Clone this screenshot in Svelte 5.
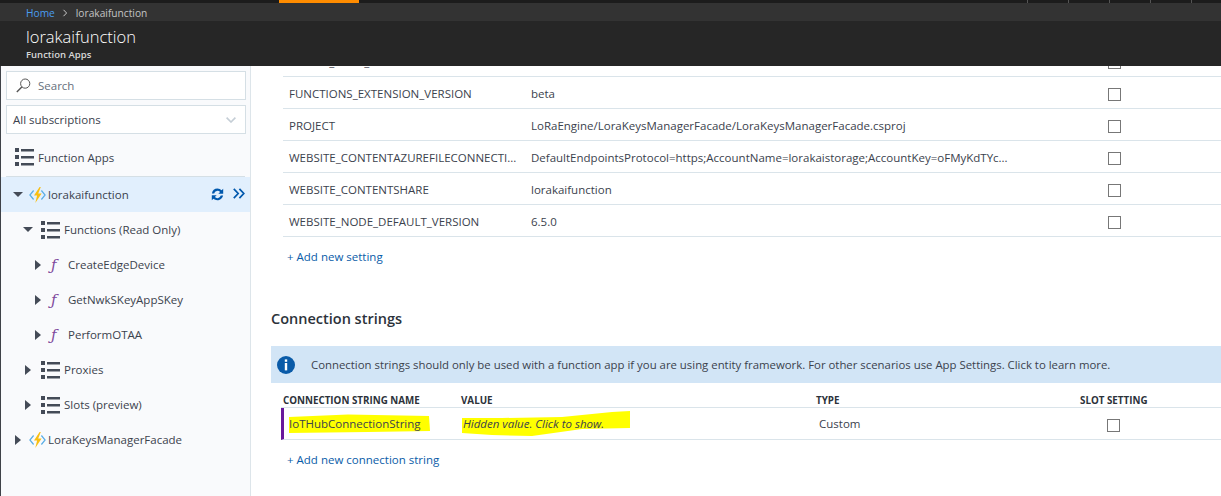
<script>
  const appSettings = [
    { name: "SERVER_HOST_NAME", value: "" },
    { name: "FUNCTIONS_EXTENSION_VERSION", value: "beta" },
    { name: "PROJECT", value: "LoRaEngine/LoraKeysManagerFacade/LoraKeysManagerFacade.csproj" },
    { name: "WEBSITE_CONTENTAZUREFILECONNECTI...", value: "DefaultEndpointsProtocol=https;AccountName=lorakaistorage;AccountKey=oFMyKdTYc..." },
    { name: "WEBSITE_CONTENTSHARE", value: "lorakaifunction" },
    { name: "WEBSITE_NODE_DEFAULT_VERSION", value: "6.5.0" }
  ];

  // one entry per row of the resource tree
  const tree = [
    { label: "lorakaifunction", indent: 12, caret: "down", icon: "app", selected: true },
    { label: "Functions (Read Only)", indent: 22, caret: "down", icon: "list" },
    { label: "CreateEdgeDevice", indent: 32, caret: "right", icon: "fn" },
    { label: "GetNwkSKeyAppSKey", indent: 32, caret: "right", icon: "fn" },
    { label: "PerformOTAA", indent: 32, caret: "right", icon: "fn" },
    { label: "Proxies", indent: 22, caret: "right", icon: "list" },
    { label: "Slots (preview)", indent: 22, caret: "right", icon: "list" },
    { label: "LoraKeysManagerFacade", indent: 12, caret: "right", icon: "app" }
  ];
</script>

{#snippet listIcon()}
  <svg class="list-icon" width="19" height="18" viewBox="0 0 19 18">
    <path fill="#444b57" d="M0 0h4v4H0zM6 1h13v2.4H6zM0 7h4v4H0zM6 8h13v2.4H6zM0 14h4v4H0zM6 15h13v2.4H6z" />
  </svg>
{/snippet}

{#snippet appIcon()}
  <svg class="app-icon" width="17" height="16" viewBox="0 0 17 16">
    <path fill="none" stroke="#5aaee6" stroke-width="1.2" d="M4.6 3.5 0.9 8l3.7 4.5M12.4 3.5 16.1 8l-3.7 4.5" />
    <path fill="#f9bf12" d="M10.6 0 5 8.6h3.1L6.3 16l6.3-9.6H9.2l2.6-6.4z" />
  </svg>
{/snippet}

<div class="portal">
  <div class="topbar">
    <span class="active-tab"></span>
    <div class="top-actions">
      <span></span><span></span><span></span><span></span><span></span>
    </div>
  </div>

  <div class="breadcrumb">
    <span class="home">Home</span>
    <svg width="6" height="8" viewBox="0 0 6 8"><path fill="none" stroke="#c8c8c8" d="M1.5 .8 4.6 4 1.5 7.2" /></svg>
    <span class="crumb">lorakaifunction</span>
  </div>

  <header class="blade-head">
    <div class="title">lorakaifunction</div>
    <div class="subtitle">Function Apps</div>
  </header>

  <div class="body">
    <aside class="sidebar">
      <div class="search">
        <svg width="15" height="15" viewBox="0 0 15 15">
          <circle cx="9.2" cy="5.6" r="4.6" fill="none" stroke="#555" stroke-width="1" />
          <path stroke="#555" stroke-width="1.4" d="M5.8 9 .8 14" />
        </svg>
        <span>Search</span>
      </div>
      <div class="subs">
        <span>All subscriptions</span>
        <svg width="10" height="6" viewBox="0 0 10 6"><path fill="none" stroke="#c5ced6" stroke-width="1.6" d="M.6.6 5 5l4.4-4.4" /></svg>
      </div>
      <div class="apps-link">
        {@render listIcon()}
        <span>Function Apps</span>
      </div>
      <div class="tree">
        {#each tree as node}
          <div class="node" class:selected={node.selected} style="padding-left: {node.indent}px">
            <span class="caret-box"><span class="caret {node.caret}"></span></span>
            {#if node.icon === "app"}
              {@render appIcon()}
            {:else if node.icon === "list"}
              {@render listIcon()}
            {:else}
              <span class="fn">ƒ</span>
            {/if}
            <span class="label">{node.label}</span>
            {#if node.selected}
              <span class="node-actions">
                <svg width="13" height="13" viewBox="0 0 13 13">
                  <path fill="#0058ad" d="M6.5 .6a5.9 5.9 0 0 1 4.1 1.7L12.2 .8v5H7.3l1.8-1.9A3.5 3.5 0 0 0 3.2 5.4H.9A5.9 5.9 0 0 1 6.5 .6zM.8 7.2h4.9L3.9 9.1a3.5 3.5 0 0 0 5.9-1.5h2.3a5.9 5.9 0 0 1-9.7 3.1L.8 12.2z" />
                </svg>
                <svg class="expand" width="12" height="11" viewBox="0 0 12 11">
                  <path fill="none" stroke="#0058ad" stroke-width="1.7" d="M.8.8 5.2 5.5.8 10.2M6.4.8l4.4 4.7-4.4 4.7" />
                </svg>
              </span>
            {/if}
          </div>
        {/each}
      </div>
    </aside>

    <main class="content">
      <div class="settings">
        {#each appSettings as s}
          <div class="row">
            <span class="name">{s.name}</span>
            <span class="value">{s.value}</span>
            <span class="box"></span>
          </div>
        {/each}
      </div>
      <div class="add first-add">+ Add new setting</div>

      <h2>Connection strings</h2>
      <div class="info">
        <svg width="18" height="18" viewBox="0 0 18 18">
          <circle cx="9" cy="9" r="9" fill="#0a5ba8" />
          <rect x="7.8" y="3.4" width="2.4" height="2.4" fill="#fff" />
          <rect x="7.8" y="7" width="2.4" height="7.4" fill="#fff" />
        </svg>
        <span>Connection strings should only be used with a function app if you are using entity framework. For other scenarios use App Settings. Click to learn more.</span>
      </div>

      <div class="conn-head">
        <span class="c-name">CONNECTION STRING NAME</span>
        <span class="c-value">VALUE</span>
        <span class="c-type">TYPE</span>
        <span class="c-slot">SLOT SETTING</span>
      </div>
      <div class="conn-row">
        <span class="c-name marked">
          <svg class="marker" width="144" height="20" viewBox="0 0 144 20"><path fill="#ffff00" d="M1 3 60 .5 141 2 142 17 80 18 1 19z" /></svg>
          <span>IoTHubConnectionString</span>
        </span>
        <span class="c-value marked">
          <svg class="marker tall" width="170" height="26" viewBox="0 0 170 26"><path fill="#ffff00" d="M0 7 40 7 100 6 150 1 168 0 168 17 120 18 70 25 30 24 0 22z" /></svg>
          <em>Hidden value. Click to show.</em>
        </span>
        <span class="c-type custom">Custom</span>
        <span class="box"></span>
      </div>
      <div class="add last-add">+ Add new connection string</div>
    </main>
  </div>
</div>

<style>
  :global(body) {
    margin: 0;
    background: #fff;
  }

  .portal {
    width: 1221px;
    height: 496px;
    display: flex;
    flex-direction: column;
    overflow: hidden;
    font-family: "Open Sans", "Liberation Sans", sans-serif;
    font-size: 11.5px;
    color: #3b424d;
  }

  /* Top chrome */
  .topbar {
    height: 3px;
    flex: none;
    background: #1c1c1c;
    display: flex;
    justify-content: space-between;
    padding-left: 279px;
  }

  .active-tab {
    width: 80px;
    background: #ff8c00;
  }

  .top-actions {
    display: flex;
    margin-right: 29px;
  }

  .top-actions span {
    width: 41px;
    border-right: 1px solid #555;
    box-sizing: border-box;
  }

  .breadcrumb {
    height: 18px;
    flex: none;
    box-sizing: border-box;
    padding: 2px 0 0 26px;
    background: #333;
    display: flex;
    align-items: center;
    gap: 6px;
    font-size: 10.2px;
  }

  .home {
    color: #4a9df0;
    margin-right: 1px;
  }

  .crumb {
    color: #c4c4c4;
    margin-left: 2px;
  }

  .blade-head {
    height: 45px;
    flex: none;
    box-sizing: border-box;
    background: #262626;
    padding: 5px 0 0 26px;
    color: #fff;
  }

  .title {
    font-size: 16.5px;
    font-weight: 300;
    line-height: 22px;
  }

  .subtitle {
    font-size: 9.5px;
    font-weight: 600;
    line-height: 13px;
    color: #d8d8d8;
  }

  .body {
    flex: 1;
    display: flex;
    min-height: 0;
  }

  /* Resource tree */
  .sidebar {
    width: 251px;
    flex: none;
    box-sizing: border-box;
    background: #f9fafc;
    border-left: 1px solid #3f4248;
    border-right: 1px solid #dde5ea;
    padding-top: 5px;
  }

  .search,
  .subs {
    margin-left: 5px;
    width: 240px;
    box-sizing: border-box;
    background: #fff;
    border: 1px solid #d5dfe5;
    display: flex;
    align-items: center;
  }

  .search {
    height: 29px;
    padding-left: 9px;
    gap: 7px;
    color: #66707c;
  }

  .subs {
    height: 29px;
    margin-top: 5px;
    padding: 0 9px 0 6px;
    justify-content: space-between;
  }

  .apps-link {
    height: 43px;
    margin: 0 5px;
    padding: 4px 0 0 9px;
    box-sizing: border-box;
    border-bottom: 1px solid #d5dfe5;
    display: flex;
    align-items: center;
  }

  .node {
    height: 35px;
    display: flex;
    align-items: center;
    box-sizing: border-box;
  }

  .node.selected {
    background: #e1effd;
  }

  .caret-box {
    width: 10px;
    flex: none;
    display: flex;
    justify-content: center;
    margin-right: 8px;
  }

  .caret {
    width: 0;
    height: 0;
  }

  .caret.down {
    border-left: 5px solid transparent;
    border-right: 5px solid transparent;
    border-top: 5px solid #444b57;
  }

  .caret.right {
    border-top: 5.5px solid transparent;
    border-bottom: 5.5px solid transparent;
    border-left: 6px solid #444b57;
  }

  .list-icon {
    flex: none;
    margin-right: 4px;
  }

  .app-icon {
    flex: none;
    margin: 0 2px 0 -2px;
  }

  .fn {
    width: 17px;
    flex: none;
    font-family: "DejaVu Serif", serif;
    font-style: italic;
    font-size: 15px;
    color: #7f4a9d;
  }

  .node-actions {
    margin-left: auto;
    margin-right: 5px;
    display: flex;
    align-items: center;
    gap: 9px;
  }

  .expand {
    margin-top: -3px;
  }

  /* Settings content */
  .content {
    flex: 1;
    min-width: 0;
    overflow: hidden;
    padding-left: 20px;
  }

  .settings {
    margin: -21px 0 0 12px;
  }

  .row {
    height: 32px;
    box-sizing: border-box;
    border-bottom: 1px solid #dae4ea;
    display: flex;
    align-items: center;
    padding: 2px 0 0 6px;
  }

  .name {
    width: 242px;
    flex: none;
    white-space: nowrap;
  }

  .value {
    width: 577px;
    flex: none;
    white-space: nowrap;
  }

  .box {
    width: 13px;
    height: 13px;
    flex: none;
    margin-top: 2px;
    box-sizing: border-box;
    border: 1px solid #777;
    background: #fff;
  }

  .add {
    color: #0a5ca8;
    margin-left: 16px;
    line-height: 16px;
  }

  .first-add {
    margin-top: 12px;
  }

  .last-add {
    margin-top: 12px;
  }

  h2 {
    margin: 44px 0 0;
    font-size: 14.5px;
    font-weight: 600;
    line-height: 20px;
    color: #2c323a;
  }

  .info {
    height: 37px;
    margin-top: 17px;
    background: #d2e5f6;
    display: flex;
    align-items: center;
    gap: 16px;
    padding-left: 6px;
    font-size: 11.39px;
    white-space: nowrap;
    overflow: hidden;
  }

  .info svg {
    flex: none;
  }

  .conn-head,
  .conn-row {
    margin-left: 10px;
    display: flex;
  }

  .conn-head {
    height: 25px;
    padding-left: 2px;
    align-items: flex-end;
    border-bottom: 1px solid #dae4ea;
    font-size: 9.8px;
    font-weight: 700;
    line-height: 12px;
    color: #2c323a;
    box-sizing: border-box;
  }

  .conn-row {
    height: 32px;
    align-items: center;
    box-sizing: border-box;
    border-left: 3px solid #68189c;
    border-bottom: 1px solid #dae4ea;
    padding-left: 5px;
  }

  .conn-row .box {
    margin-top: 4px;
  }

  .c-name {
    width: 178px;
    flex: none;
  }

  .c-value {
    width: 355px;
    flex: none;
  }

  .c-type {
    width: 264px;
    flex: none;
  }

  .conn-row .c-name {
    width: 174px;
  }

  .conn-row .c-type {
    width: 289px;
  }

  .marked {
    position: relative;
    z-index: 0;
  }

  .marker {
    position: absolute;
    z-index: -1;
    left: -1px;
    top: -2px;
  }

  .marker.tall {
    top: -5px;
  }

  .custom {
    padding-left: 1px;
    margin-right: -1px;
  }
</style>
